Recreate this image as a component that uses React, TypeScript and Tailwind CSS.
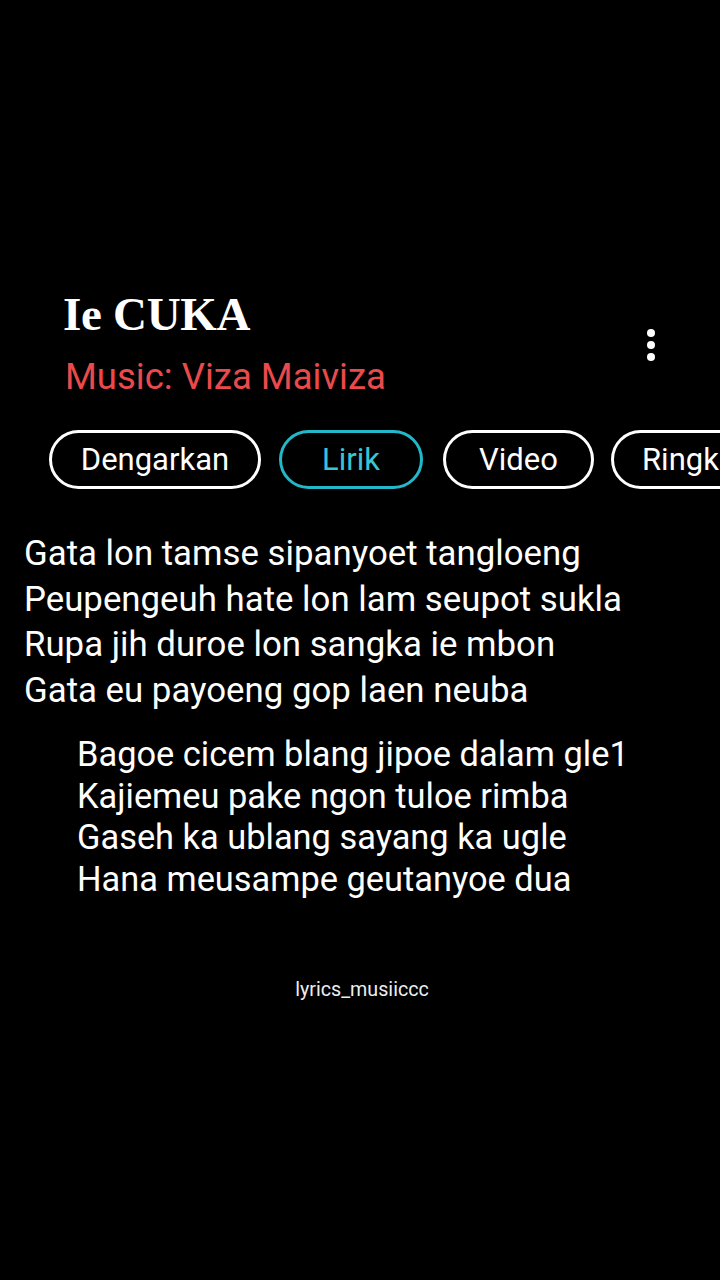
export default function App() {
  const verse1 = [
    "Gata lon tamse sipanyoet tangloeng",
    "Peupengeuh hate lon lam seupot sukla",
    "Rupa jih duroe lon sangka ie mbon",
    "Gata eu payoeng gop laen neuba",
  ];
  const verse2 = [
    "Bagoe cicem blang jipoe dalam gle1",
    "Kajiemeu pake ngon tuloe rimba",
    "Gaseh ka ublang sayang ka ugle",
    "Hana meusampe geutanyoe dua",
  ];

  return (
    <div className="w-[720px] h-[1280px] bg-black overflow-hidden text-white font-['Roboto',sans-serif]">
      {/* Header */}
      <div className="pt-[285px] pl-[63px] pr-[65px] flex items-center justify-between">
        <div>
          <h1 className="font-['Liberation_Serif',serif] font-bold text-[47px] leading-[58px] tracking-[-0.3px]">
            Ie CUKA
          </h1>
          <p className="mt-[10px] ml-[2px] text-[36.5px] leading-[48px] text-[#ea4a4b]">
            Music: Viza Maiviza
          </p>
        </div>
        <div className="flex flex-col items-center gap-[4px] mt-[4px]">
          <span className="w-[8px] h-[8px] rounded-full bg-white" />
          <span className="w-[8px] h-[8px] rounded-full bg-white" />
          <span className="w-[8px] h-[8px] rounded-full bg-white" />
        </div>
      </div>

      {/* Tabs */}
      <div className="mt-[29px] pl-[49px] flex items-center whitespace-nowrap text-[31px]">
        <div className="w-[212px] h-[59px] shrink-0 rounded-full border-[3px] border-white flex items-center justify-center pt-[2px]">
          Dengarkan
        </div>
        <div className="ml-[18px] w-[144px] h-[59px] shrink-0 rounded-full border-[3px] border-[#22b8c9] text-[#3cc3d3] flex items-center justify-center pt-[2px]">
          Lirik
        </div>
        <div className="ml-[20px] w-[151px] h-[59px] shrink-0 rounded-full border-[3px] border-white flex items-center justify-center pt-[2px]">
          Video
        </div>
        <div className="ml-[17px] w-[200px] h-[59px] shrink-0 rounded-full border-[3px] border-white flex items-center pl-[28px] pt-[2px]">
          Ringkasan
        </div>
      </div>

      {/* Lyrics */}
      <div className="mt-[42px] pl-[24px] text-[34.8px] leading-[45.5px]">
        {verse1.map((l) => (
          <p key={l}>{l}</p>
        ))}
      </div>
      <div className="mt-[21px] pl-[77px] text-[34.4px] leading-[41.5px]">
        {verse2.map((l) => (
          <p key={l}>{l}</p>
        ))}
      </div>

      {/* Watermark */}
      <p className="mt-[78px] text-center pl-[4px] text-[19.7px] leading-[24px] text-[#eeeeee]">
        lyrics_musiiccc
      </p>
    </div>
  );
}
